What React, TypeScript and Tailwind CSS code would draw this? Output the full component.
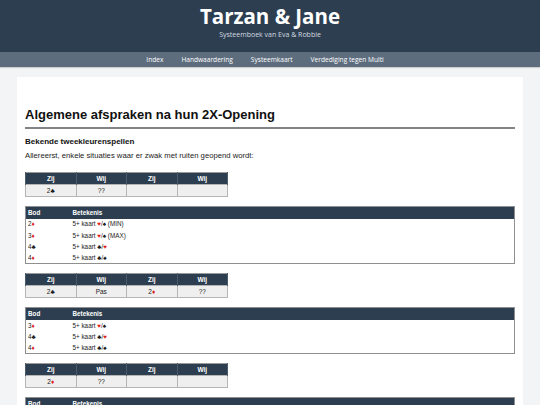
const navItems = ["Index", "Handwaardering", "Systeemkaart", "Verdediging tegen Multi"];

const S = ({ s }: { s: string }) => {
  const red = s === "♥" || s === "♦";
  return <span className={red ? "text-[#e11d1d]" : "text-[#111]"}>{s}</span>;
};

// renders "2♦" style strings with coloured suit glyphs
const Txt = ({ v }: { v: string }) => (
  <>
    {Array.from(v).map((ch, i) =>
      "♠♥♦♣".includes(ch) ? <S key={i} s={ch} /> : <span key={i}>{ch}</span>
    )}
  </>
);

const Auction = ({ cells }: { cells: string[] }) => (
  <table className="w-[203px] border-collapse border border-[#9a9a9a] text-[6.5px] font-['Liberation_Sans',Arial,sans-serif]">
    <thead>
      <tr className="bg-[#2c3e50] text-white h-[12px]">
        {["Zij", "Wij", "Zij", "Wij"].map((h, i) => (
          <th key={i} className="w-1/4 border-x border-[#4a5b6c] font-bold text-center p-0">
            {h}
          </th>
        ))}
      </tr>
    </thead>
    <tbody>
      <tr className="bg-[#efefef] h-[12px] text-[#222]">
        {cells.map((c, i) => (
          <td key={i} className="border border-[#b5b5b5] text-center p-0">
            <Txt v={c} />
          </td>
        ))}
      </tr>
    </tbody>
  </table>
);

const Meaning = ({ rows }: { rows: [string, string][] }) => (
  <table className="w-full border-collapse border border-[#8f8f8f] text-[6.3px] font-['Liberation_Sans',Arial,sans-serif]">
    <thead>
      <tr className="bg-[#2c3e50] text-white h-[12px]">
        <th className="w-[47px] text-left font-bold pl-[2px] p-0">Bod</th>
        <th className="text-left font-bold p-0">Betekenis</th>
      </tr>
    </thead>
    <tbody>
      {rows.map(([b, m], i) => (
        <tr key={i} className="h-[11.3px] text-[#222]">
          <td className="pl-[2px] p-0">
            <Txt v={b} />
          </td>
          <td className="p-0">
            <Txt v={m} />
          </td>
        </tr>
      ))}
    </tbody>
  </table>
);

export default function App() {
  return (
    <div className="w-[540px] h-[405px] overflow-hidden bg-[#f3f4f6]">
      <header className="bg-[#2c3e50] h-[52px] flex flex-col items-center pt-[3px]">
        <h1 className="text-white font-bold text-[20.5px] leading-[27px] font-['Open_Sans',sans-serif]">
          Tarzan &amp; Jane
        </h1>
        <p className="text-[#d5dbe1] text-[7px] leading-[10px] font-['Open_Sans',sans-serif]">
          Systeemboek van Eva &amp; Robbie
        </p>
      </header>
      <nav className="bg-[#5d6d7e] h-[15px] flex items-center justify-center gap-[18px] pr-[10px] shadow-[0_1px_1px_rgba(0,0,0,0.15)]">
        {navItems.map((n) => (
          <span key={n} className="text-white text-[6.6px] font-['Open_Sans',sans-serif]">
            {n}
          </span>
        ))}
      </nav>
      <main className="px-[17px] pt-[10px]">
        <div className="bg-white px-[8px] pt-[30px] pb-4 font-['Liberation_Sans',Arial,sans-serif]">
          <h2 className="text-[13px] leading-[16px] font-bold text-[#111] pb-[4px] border-b-2 border-[#808487]">
            Algemene afspraken na hun 2X-Opening
          </h2>
          <h3 className="mt-[7px] text-[8px] leading-[11px] font-bold text-[#111]">
            Bekende tweekleurenspellen
          </h3>
          <p className="mt-[4px] text-[7.7px] leading-[9px] text-[#222]">
            Allereerst, enkele situaties waar er zwak met ruiten geopend wordt:
          </p>
          <div className="mt-[12px] flex flex-col gap-[9px]">
            <Auction cells={["2♣", "??", "", ""]} />
            <Meaning
              rows={[
                ["2♦", "5+ kaart ♥/♠ (MIN)"],
                ["3♦", "5+ kaart ♥/♠ (MAX)"],
                ["4♣", "5+ kaart ♣/♥"],
                ["4♦", "5+ kaart ♣/♠"],
              ]}
            />
            <Auction cells={["2♣", "Pas", "2♦", "??"]} />
            <Meaning
              rows={[
                ["3♦", "5+ kaart ♥/♠"],
                ["4♣", "5+ kaart ♣/♥"],
                ["4♦", "5+ kaart ♣/♠"],
              ]}
            />
            <Auction cells={["2♦", "??", "", ""]} />
            <Meaning rows={[["3♦", "5+ kaart ♥/♠"]]} />
          </div>
        </div>
      </main>
    </div>
  );
}
